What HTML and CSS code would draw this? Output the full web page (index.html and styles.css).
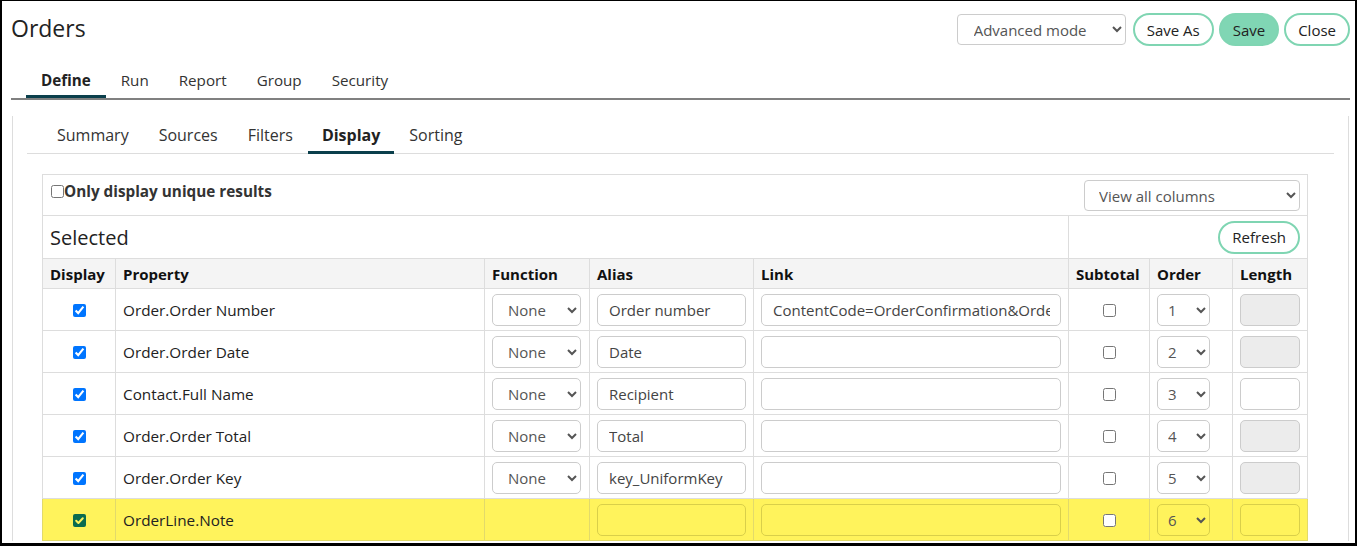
FILE: index.html
```html
<!DOCTYPE html>
<html>
<head>
<meta charset="utf-8">
<link rel="stylesheet" href="styles.css">
</head>
<body>
<div class="frame">
  <header class="topbar">
    <h1 class="title">Orders</h1>
    <div class="actions">
      <select class="mode"><option>Advanced mode</option></select>
      <button class="btn">Save As</button>
      <button class="btn btn-fill">Save</button>
      <button class="btn">Close</button>
    </div>
  </header>
  <nav class="tabs">
    <span class="tab active">Define</span>
    <span class="tab">Run</span>
    <span class="tab">Report</span>
    <span class="tab">Group</span>
    <span class="tab">Security</span>
  </nav>
  <div class="panel">
    <nav class="subtabs">
      <span class="subtab">Summary</span>
      <span class="subtab">Sources</span>
      <span class="subtab">Filters</span>
      <span class="subtab active">Display</span>
      <span class="subtab">Sorting</span>
    </nav>
    <table class="grid">
      <colgroup>
        <col class="c-display"><col class="c-property"><col class="c-function"><col class="c-alias"><col class="c-link"><col class="c-subtotal"><col class="c-order"><col class="c-length">
      </colgroup>
      <tr class="optrow">
        <td colspan="8">
          <div class="opts">
            <label class="unique"><input type="checkbox">Only display unique results</label>
            <select class="viewcols"><option>View all columns</option></select>
          </div>
        </td>
      </tr>
      <tr class="selrow">
        <td colspan="5" class="seltitle">Selected</td>
        <td colspan="3" class="refreshcell"><button class="btn">Refresh</button></td>
      </tr>
      <tr class="head">
        <th>Display</th><th>Property</th><th>Function</th><th>Alias</th><th>Link</th><th>Subtotal</th><th>Order</th><th>Length</th>
      </tr>
      <tr>
        <td class="ctr"><input type="checkbox" checked></td>
        <td class="prop">Order.Order Number</td>
        <td><select class="fn"><option>None</option></select></td>
        <td><input class="txt" type="text" value="Order number"></td>
        <td><input class="txt" type="text" value="ContentCode=OrderConfirmation&amp;OrderKey"></td>
        <td class="ctr"><input type="checkbox"></td>
        <td><select class="ord"><option>1</option></select></td>
        <td><input class="txt" type="text" disabled></td>
      </tr>
      <tr>
        <td class="ctr"><input type="checkbox" checked></td>
        <td class="prop">Order.Order Date</td>
        <td><select class="fn"><option>None</option></select></td>
        <td><input class="txt" type="text" value="Date"></td>
        <td><input class="txt" type="text" value=""></td>
        <td class="ctr"><input type="checkbox"></td>
        <td><select class="ord"><option>2</option></select></td>
        <td><input class="txt" type="text" disabled></td>
      </tr>
      <tr>
        <td class="ctr"><input type="checkbox" checked></td>
        <td class="prop">Contact.Full Name</td>
        <td><select class="fn"><option>None</option></select></td>
        <td><input class="txt" type="text" value="Recipient"></td>
        <td><input class="txt" type="text" value=""></td>
        <td class="ctr"><input type="checkbox"></td>
        <td><select class="ord"><option>3</option></select></td>
        <td><input class="txt" type="text"></td>
      </tr>
      <tr>
        <td class="ctr"><input type="checkbox" checked></td>
        <td class="prop">Order.Order Total</td>
        <td><select class="fn"><option>None</option></select></td>
        <td><input class="txt" type="text" value="Total"></td>
        <td><input class="txt" type="text" value=""></td>
        <td class="ctr"><input type="checkbox"></td>
        <td><select class="ord"><option>4</option></select></td>
        <td><input class="txt" type="text" disabled></td>
      </tr>
      <tr>
        <td class="ctr"><input type="checkbox" checked></td>
        <td class="prop">Order.Order Key</td>
        <td><select class="fn"><option>None</option></select></td>
        <td><input class="txt" type="text" value="key_UniformKey"></td>
        <td><input class="txt" type="text" value=""></td>
        <td class="ctr"><input type="checkbox"></td>
        <td><select class="ord"><option>5</option></select></td>
        <td><input class="txt" type="text" disabled></td>
      </tr>
      <tr class="hl">
        <td class="ctr"><span class="cbx-hl"><svg width="13" height="13" viewBox="0 0 13 13"><path d="M3.2 6.8 L5.4 9 L9.8 4.2" fill="none" stroke="#fff35c" stroke-width="2" stroke-linecap="round" stroke-linejoin="round"/></svg></span></td>
        <td class="prop">OrderLine.Note</td>
        <td></td>
        <td><input class="txt" type="text" value=""></td>
        <td><input class="txt" type="text" value=""></td>
        <td class="ctr"><input type="checkbox"></td>
        <td><select class="ord"><option>6</option></select></td>
        <td><input class="txt" type="text"></td>
      </tr>
    </table>
  </div>
</div>
</body>
</html>
```
FILE: styles.css
```css
* { box-sizing: border-box; }
html, body { margin: 0; padding: 0; background: #fff; }
body {
  font-family: "Open Sans", "DejaVu Sans", sans-serif;
  font-size: 15px;
  color: #222;
}
.frame {
  width: 1357px;
  height: 546px;
  overflow: hidden;
  border-style: solid;
  border-color: #000;
  border-width: 1px 2px 3px 2px;
}
.topbar {
  display: flex;
  justify-content: space-between;
  align-items: center;
  padding: 12px 5px 0 9px;
}
.title {
  margin: 0;
  font-size: 23px;
  font-weight: 500;
  color: #222;
  line-height: 30px;
  margin-top: -4px;
}
.actions { display: flex; align-items: center; gap: 5px; }
.mode {
  width: 169px;
  height: 31px;
  border: 1px solid #ccc;
  border-radius: 4px;
  background: #fff;
  color: #555;
  font-family: inherit;
  font-size: 15px;
  padding: 0 8px 0 12px;
  margin-right: 2px;
}
.btn {
  height: 33px;
  border: 2px solid #7fd5b2;
  border-radius: 17px;
  background: #fff;
  color: #222;
  font-family: inherit;
  font-size: 15px;
  font-weight: 500;
  padding: 0 12px;
}
.btn-fill { background: #80d6b4; }

.tabs {
  display: flex;
  margin: 16px 5px 0 9px;
  border-bottom: 2px solid #808080;
  padding-left: 15px;
}
.tab {
  padding: 8px 15px 5px;
  line-height: 20px;
  font-size: 15.2px;
  color: #333;
  border-bottom: 3px solid transparent;
}
.tab.active { font-weight: 700; border-bottom-color: #0b3f4c; color: #222; }

.panel {
  margin: 0 6px 0 10px;
  border-left: 1px solid #ddd;
  border-right: 1px solid #ddd;
  padding: 0 14px;
}
.subtabs {
  display: flex;
  margin-top: 16px;
  padding-left: 15px;
  border-bottom: 1px solid #ddd;
}
.subtab {
  padding: 9px 15px 6px;
  line-height: 20px;
  font-size: 16px;
  color: #333;
  border-bottom: 3px solid transparent;
  margin-bottom: -1px;
}
.subtab.active { font-weight: 700; border-bottom-color: #0b3f4c; color: #222; padding: 9px 14px 6px; }

.grid {
  margin: 20px 0 0 15px;
  width: 1265px;
  table-layout: fixed;
  border-collapse: collapse;
}
.c-display { width: 73px; }
.c-property { width: 369px; }
.c-function { width: 105px; }
.c-alias { width: 164px; }
.c-link { width: 315px; }
.c-subtotal { width: 81px; }
.c-order { width: 83px; }
.c-length { width: 75px; }

.grid td, .grid th {
  border: 1px solid #ddd;
  padding: 0 7px;
  height: 42px;
  color: #222;
  text-align: left;
  white-space: nowrap;
  overflow: hidden;
}
.grid th { height: 30px; background: #f4f4f4; font-weight: 700; color: #111; }
.grid td.ctr { text-align: center; padding: 0 0 2px; }
.grid td.prop { font-size: 15.3px; }

.grid .optrow td { padding: 5px 7px 3px 8px; vertical-align: top; height: 41px; }
.opts { display: flex; justify-content: space-between; align-items: flex-start; }
.unique { font-weight: 700; color: #333; display: flex; align-items: center; margin-top: 1px; line-height: 20px; font-size: 15.3px; }
.unique input { margin: 0 3px 0 1px; }
.viewcols {
  width: 216px;
  height: 31px;
  border: 1px solid #ccc;
  border-radius: 4px;
  background: #fff;
  color: #555;
  font-family: inherit;
  font-size: 15px;
  padding: 0 8px 0 10px;
}
.grid .selrow td { height: 43px; }
.seltitle { font-size: 20px; font-weight: 500; }
.grid td.refreshcell { text-align: right; padding-right: 7px; }

.fn, .ord {
  height: 32px;
  border: 1px solid #ccc;
  border-radius: 5px;
  background: #fff;
  color: #555;
  font-family: inherit;
  font-size: 15px;
  padding: 0 6px 0 11px;
}
.fn { width: 89px; }
.ord { width: 53px; padding-left: 6px; }
.txt {
  width: 100%;
  height: 32px;
  border: 1px solid #ccc;
  border-radius: 5px;
  background: #fff;
  color: #444;
  font-family: inherit;
  font-size: 15px;
  padding: 0 10px 0 11px;
}
.txt:disabled { background: #ececec; }
input[type="checkbox"] { width: 13px; height: 13px; margin: 0; vertical-align: middle; accent-color: #0075ff; }

.cbx-hl {
  display: inline-block;
  width: 13px;
  height: 13px;
  background: #0b6b4f;
  border-radius: 2px;
  vertical-align: middle;
}
.cbx-hl svg { display: block; }

.hl td { background: #fff35c; border-color: #e2da6a; }
.hl .txt, .hl .ord { background: #fff35c; border-color: #d9cf4a; }
```
